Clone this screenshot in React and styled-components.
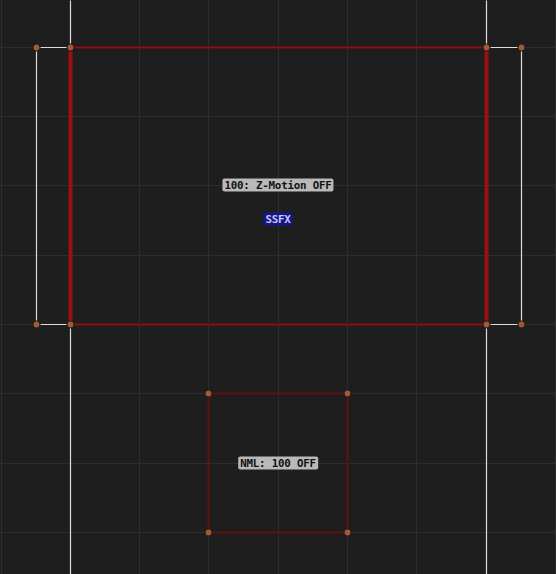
import React from 'react';
import styled, { createGlobalStyle } from 'styled-components';

const GlobalStyle = createGlobalStyle`
  html, body {
    margin: 0;
    padding: 0;
    background: #1e1e1e;
    overflow: hidden;
  }
`;

const Canvas = styled.div`
  position: relative;
  width: 556px;
  height: 574px;
  background: #1e1e1e;
  overflow: hidden;
`;

const MapSvg = styled.svg`
  display: block;
  position: absolute;
  inset: 0;
`;

const Label = styled.div`
  position: absolute;
  transform: translate(-50%, -50%);
  padding: 0 2px;
  height: 13px;
  line-height: 13px;
  border-radius: 2px;
  font-family: 'DejaVu Sans Mono', 'Liberation Mono', monospace;
  font-weight: bold;
  font-size: 10.8px;
  letter-spacing: -0.2px;
  white-space: nowrap;
  background: ${(p) => (p.$kind === 'sfx' ? '#16168c' : '#b9b9b9')};
  color: ${(p) => (p.$kind === 'sfx' ? '#c8c8f0' : '#111')};
`;

const GRID_X = [1, 70, 139, 208, 278, 347, 416, 486, 555];
const GRID_Y = [47, 116, 185, 255, 324, 393, 463, 532];

const white = [
  [70, 0, 70, 47],
  [70, 324, 70, 574],
  [486, 0, 486, 47],
  [486, 324, 486, 574],
  [36, 47, 70, 47],
  [36, 47, 36, 324],
  [36, 324, 70, 324],
  [486, 47, 521, 47],
  [521, 47, 521, 324],
  [486, 324, 521, 324],
];

const redThin = [
  [70, 47, 486, 47],
  [70, 324, 486, 324],
];

const redThick = [
  [70, 47, 70, 324],
  [486, 47, 486, 324],
];

const lowerSector = [
  [208, 393, 347, 393],
  [347, 393, 347, 532],
  [347, 532, 208, 532],
  [208, 532, 208, 393],
];

const vertices = [
  [36, 47], [70, 47], [486, 47], [521, 47],
  [36, 324], [70, 324], [486, 324], [521, 324],
  [208, 393], [347, 393], [208, 532], [347, 532],
];

const labels = [
  { text: '100: Z-Motion OFF', x: 278, y: 185 },
  { text: 'SSFX', x: 278, y: 219, kind: 'sfx' },
  { text: 'NML: 100 OFF', x: 278, y: 463 },
];

const Line = ({ l, ...rest }) => <line x1={l[0]} y1={l[1]} x2={l[2]} y2={l[3]} {...rest} />;

export default function App() {
  return (
    <>
      <GlobalStyle />
      <Canvas>
        <MapSvg width="556" height="574" viewBox="0 0 556 574">
          <g stroke="#2d2d2d" strokeWidth="1" shapeRendering="crispEdges">
            {GRID_X.map((x) => (
              <line key={'gx' + x} x1={x + 0.5} y1="0" x2={x + 0.5} y2="574" />
            ))}
            {GRID_Y.map((y) => (
              <line key={'gy' + y} x1="0" y1={y + 0.5} x2="556" y2={y + 0.5} />
            ))}
          </g>
          <g stroke="#dcdcdc" strokeWidth="1.2">
            {white.map((l, i) => (
              <Line key={'w' + i} l={l.map((v) => v + 0.5)} />
            ))}
          </g>
          <g stroke="#5a1010" strokeWidth="3">
            {redThin.map((l, i) => (
              <Line key={'rt' + i} l={l.map((v) => v + 0.5)} />
            ))}
          </g>
          <g stroke="#8a1414" strokeWidth="1">
            {redThin.map((l, i) => (
              <Line key={'rt2' + i} l={l.map((v) => v + 0.5)} />
            ))}
          </g>
          <g stroke="#9c0f0f" strokeWidth="4">
            {redThick.map((l, i) => (
              <Line key={'rk' + i} l={l.map((v) => v + 0.5)} />
            ))}
          </g>
          <g stroke="#5e1212" strokeWidth="2">
            {lowerSector.map((l, i) => (
              <Line key={'ls' + i} l={l.map((v) => v + 0.5)} />
            ))}
          </g>
          <g fill="#9a5c3a" stroke="#2a1a12" strokeWidth="1.2">
            {vertices.map(([x, y], i) => (
              <circle key={'v' + i} cx={x + 0.5} cy={y + 0.5} r="3.5" />
            ))}
          </g>
        </MapSvg>
        {labels.map((lb) => (
          <Label key={lb.text} $kind={lb.kind} style={{ left: lb.x, top: lb.y }}>
            {lb.text}
          </Label>
        ))}
      </Canvas>
    </>
  );
}
